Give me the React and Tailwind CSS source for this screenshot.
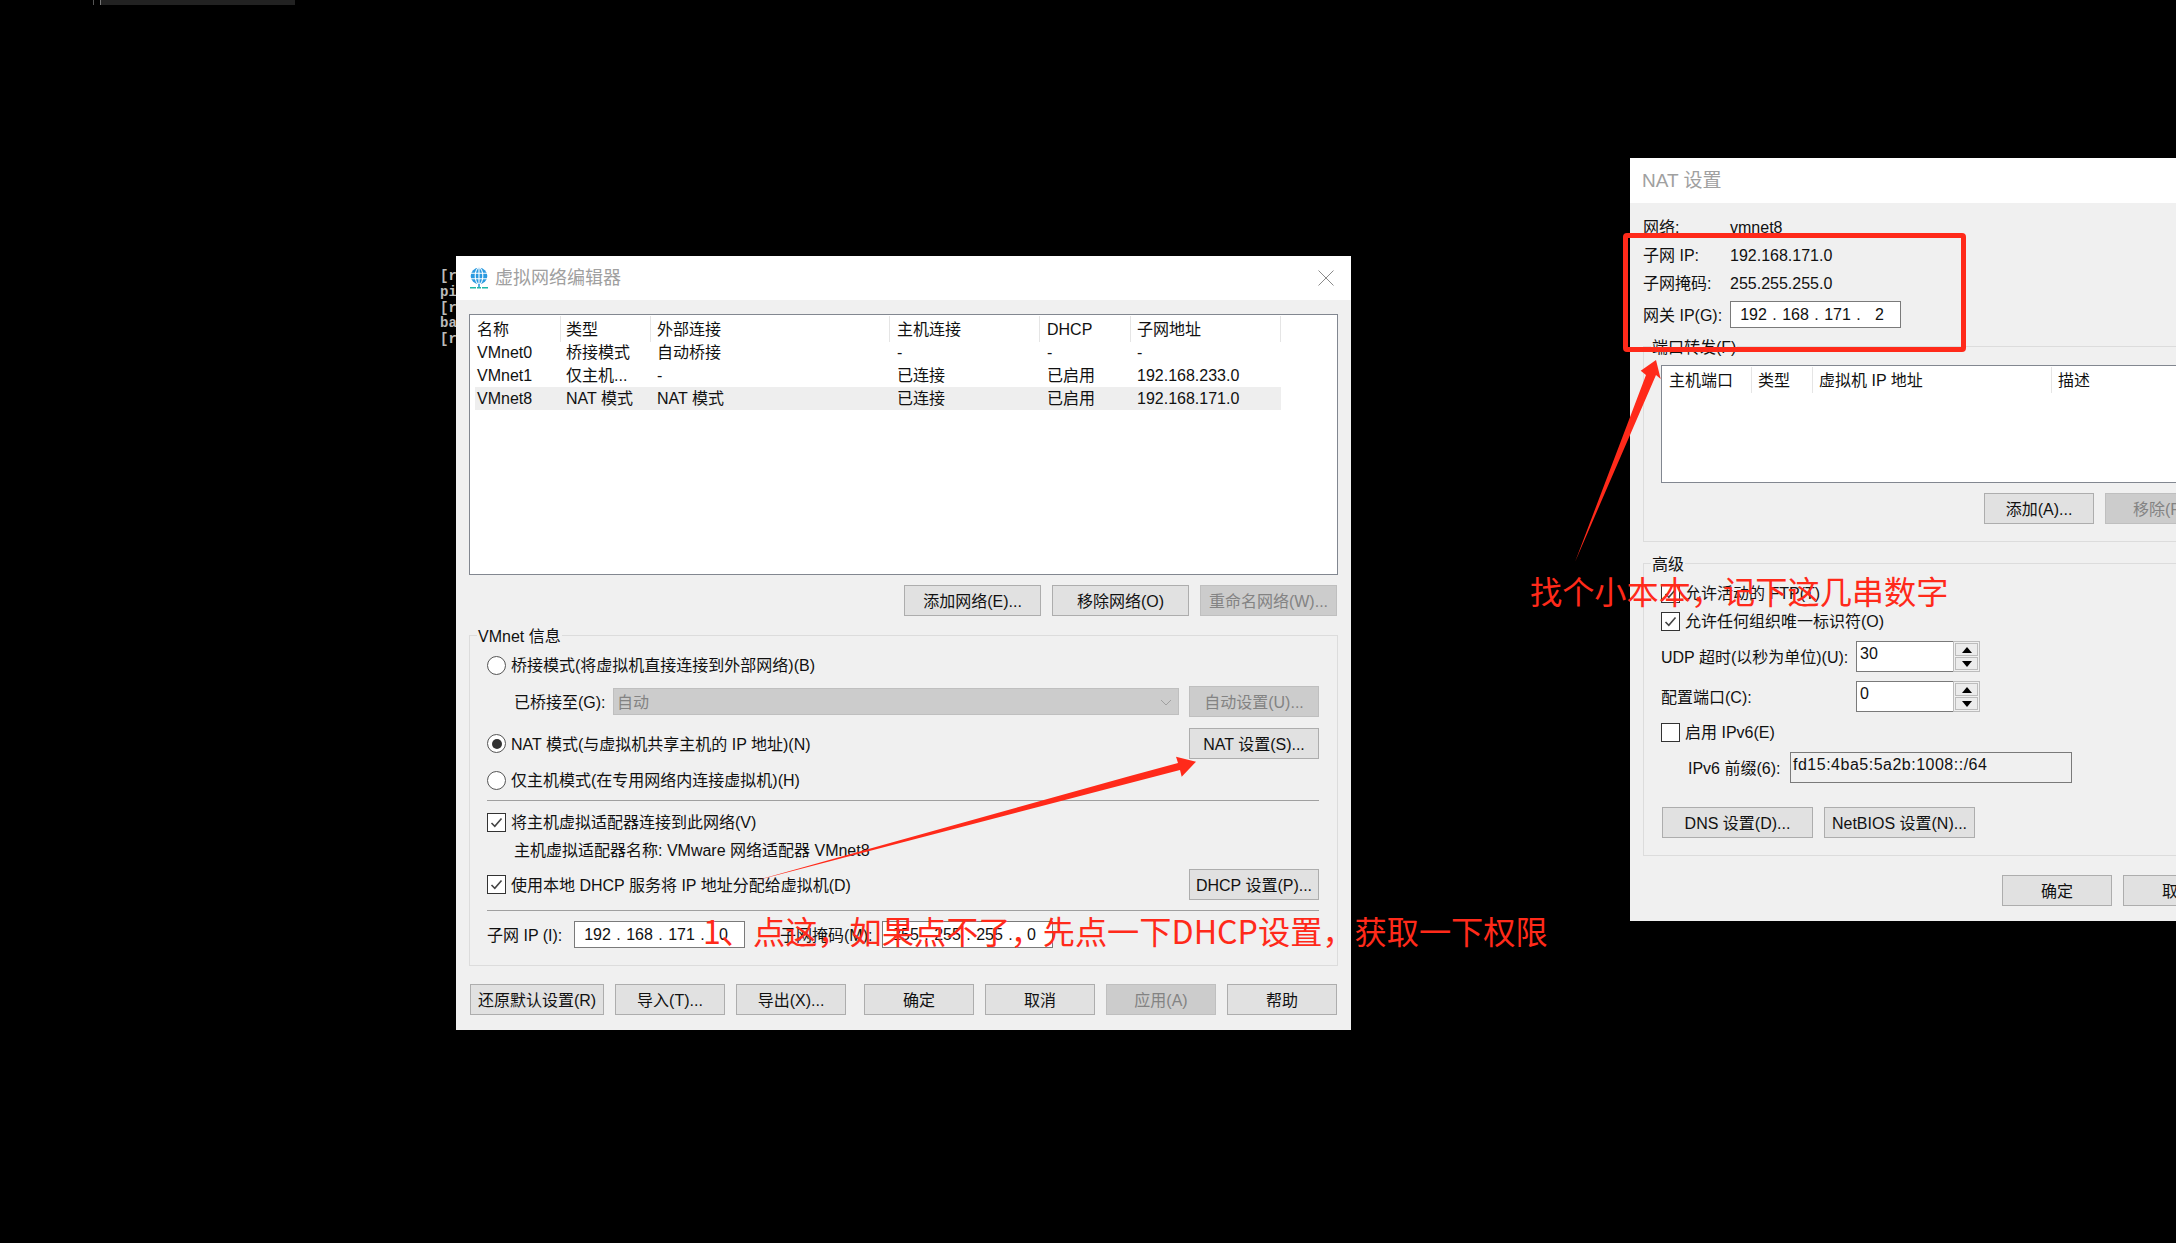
import React from "react";

function T({ children, extra = "" }) {
  return <span className={`pt-[2px] whitespace-nowrap ${extra}`}>{children}</span>;
}

function Btn({ children, w = "w-[110px]", disabled = false, extra = "" }) {
  const tone = disabled
    ? "bg-[#cccccc] border-[#bfbfbf] text-[#838383]"
    : "bg-[#e1e1e1] border-[#adadad] text-[#111111]";
  return (
    <div className={`${w} ${tone} ${extra} h-[31px] shrink-0 border-[1.5px] pt-[2px] flex items-center justify-center text-[16px] whitespace-nowrap`}>
      {children}
    </div>
  );
}

function Radio({ checked = false }) {
  return (
    <div className="w-[19px] h-[19px] shrink-0 rounded-full border-[1.5px] border-[#555555] bg-white flex items-center justify-center">
      {checked && <div className="w-[10px] h-[10px] rounded-full bg-[#333333]" />}
    </div>
  );
}

function Check({ checked = true }) {
  return (
    <div className="w-[19px] h-[19px] shrink-0 border border-[#333333] bg-white flex items-center justify-center">
      {checked && (
        <svg width="13" height="11" viewBox="0 0 13 11" fill="none">
          <path d="M1.5 6 L4.8 9.3 L11.5 1.5" stroke="#444444" strokeWidth="1.6" />
        </svg>
      )}
    </div>
  );
}

function Legend({ children }) {
  return (
    <div className="absolute left-[7px] top-[-10px] px-[1px] bg-[#f0f0f0] h-[22px] leading-[22px] text-[16px] text-[#111111] whitespace-nowrap">
      {children}
    </div>
  );
}

function IpBox({ parts }) {
  return (
    <div className="w-[171px] h-[27px] shrink-0 border border-[#7a7a7a] bg-white pl-[9px] pt-[1px] flex items-center text-[16px] text-[#111111]">
      <span className="w-[27px] text-center">{parts[0]}</span>
      <span className="w-[15px] text-center">.</span>
      <span className="w-[27px] text-center">{parts[1]}</span>
      <span className="w-[15px] text-center">.</span>
      <span className="w-[27px] text-center">{parts[2]}</span>
      <span className="w-[15px] text-center">.</span>
      <span className="w-[27px] text-center">{parts[3]}</span>
    </div>
  );
}

function Spinner({ value }) {
  return (
    <div className="w-[124px] h-[31px] shrink-0 flex">
      <div className="w-[97px] h-full border-y-[1.5px] border-l-[1.5px] border-[#7a7a7a] bg-white pl-[3px] pt-[1px] leading-[22px] text-[16px] text-[#111111]">
        {value}
      </div>
      <div className="w-[27px] h-full border-[1.5px] border-[#bcbcbc] p-[1px] flex flex-col gap-[1px]">
        <div className="flex-1 border border-[#bcbcbc] bg-[#ececec] flex items-center justify-center">
          <svg width="10" height="6" viewBox="0 0 10 6"><path d="M5 0 L10 6 H0 Z" fill="#000000" /></svg>
        </div>
        <div className="flex-1 border border-[#bcbcbc] bg-[#ececec] flex items-center justify-center">
          <svg width="10" height="6" viewBox="0 0 10 6"><path d="M0 0 H10 L5 6 Z" fill="#000000" /></svg>
        </div>
      </div>
    </div>
  );
}

const padCols = ["pl-[2px]", "pl-[5px]", "pl-[6px]", "pl-[7px]", "pl-[7px]", "pl-[6px]"];

function Row({ cells, active = false }) {
  return (
    <div className={`grid grid-cols-[86px_90px_239px_150px_91px_150px] w-[806px] h-[23px] items-center ${active ? "bg-[#eeeeee]" : ""}`}>
      {cells.map((c, i) => (
        <div key={i} className={`${padCols[i]} whitespace-nowrap`}>{c}</div>
      ))}
    </div>
  );
}

function VirtualNetworkEditor() {
  const header = ["名称", "类型", "外部连接", "主机连接", "DHCP", "子网地址"];
  return (
    <div className="absolute left-[456px] top-[256px] w-[895px] h-[774px] bg-[#f0f0f0] text-[16px] text-[#111111] flex flex-col">
      <div className="h-[44px] shrink-0 bg-white flex items-center pl-[13px] pr-[17px]">
        <svg width="20" height="22" viewBox="0 0 20 22" fill="none" className="shrink-0">
          <circle cx="10" cy="9" r="8.3" fill="#2a9ae0" />
          <ellipse cx="10" cy="9" rx="3.8" ry="8.3" stroke="#ffffff" strokeWidth="1.1" />
          <path d="M1.5 6.2 H18.5 M1.5 11.8 H18.5 M10 1 V17" stroke="#ffffff" strokeWidth="1.1" />
          <path d="M10 17 V20" stroke="#2a9ae0" strokeWidth="1.6" />
          <path d="M1 20.8 H7 M8 20.8 H12 M13 20.8 H19" stroke="#1fb8a8" strokeWidth="1.4" />
        </svg>
        <div className="ml-[6px] text-[18px] text-[#a0a0a0]">虚拟网络编辑器</div>
        <svg width="16" height="16" viewBox="0 0 16 16" className="ml-auto" fill="none">
          <path d="M0.5 0.5 L15.5 15.5 M15.5 0.5 L0.5 15.5" stroke="#8a8a8a" strokeWidth="1" />
        </svg>
      </div>
      <div className="pl-[13px] flex flex-col">
        <div className="mt-[14px] w-[869px] h-[261px] border border-[#828790] bg-white pl-[5px] pt-[1px]">
          <div className="grid grid-cols-[86px_90px_239px_150px_91px_150px] w-[806px] h-[25px] items-center">
            {header.map((h, i) => (
              <div key={h} className={`${padCols[i]} pt-[2px] h-full flex items-center border-r border-[#e5e5e5] whitespace-nowrap`}>{h}</div>
            ))}
          </div>
          <Row cells={["VMnet0", "桥接模式", "自动桥接", "-", "-", "-"]} />
          <Row cells={["VMnet1", "仅主机...", "-", "已连接", "已启用", "192.168.233.0"]} />
          <Row active cells={["VMnet8", "NAT 模式", "NAT 模式", "已连接", "已启用", "192.168.171.0"]} />
        </div>

        <div className="mt-[10px] w-[868px] flex justify-end gap-[11px]">
          <Btn w="w-[137px]">添加网络(E)...</Btn>
          <Btn w="w-[137px]">移除网络(O)</Btn>
          <Btn w="w-[137px]" disabled>重命名网络(W)...</Btn>
        </div>

        <div className="relative mt-[19px] w-[869px] h-[331px] border border-[#dcdcdc] pl-[17px] pr-[18px] flex flex-col">
          <Legend>VMnet 信息</Legend>
          <div className="mt-[16px] h-[26px] flex items-center gap-[5px]"><Radio /><T>桥接模式(将虚拟机直接连接到外部网络)(B)</T></div>
          <div className="mt-[8px] h-[31px] flex items-center pl-[27px]">
            <T extra="w-[99px]">已桥接至(G):</T>
            <div className="w-[566px] h-[27px] border border-[#bfbfbf] bg-[#cccccc] pl-[3px] pr-[6px] pt-[2px] flex items-center text-[#838383]">
              自动
              <svg width="12" height="7" viewBox="0 0 12 7" fill="none" className="ml-auto">
                <path d="M1 1 L6 6 L11 1" stroke="#a0a0a0" strokeWidth="1" />
              </svg>
            </div>
            <Btn w="w-[130px]" disabled extra="ml-[10px]">自动设置(U)...</Btn>
          </div>
          <div className="mt-[11px] h-[31px] flex items-center gap-[5px]">
            <Radio checked /><T>NAT 模式(与虚拟机共享主机的 IP 地址)(N)</T>
            <Btn w="w-[130px]" extra="ml-auto">NAT 设置(S)...</Btn>
          </div>
          <div className="mt-[8px] h-[26px] flex items-center gap-[5px]"><Radio /><T>仅主机模式(在专用网络内连接虚拟机)(H)</T></div>
          <div className="mt-[7px] h-[1px] shrink-0 bg-[#a0a0a0]" />
          <div className="mt-[8px] h-[26px] flex items-center gap-[5px]"><Check /><T>将主机虚拟适配器连接到此网络(V)</T></div>
          <div className="mt-[3px] h-[24px] flex items-center pl-[27px]"><T>主机虚拟适配器名称: VMware 网络适配器 VMnet8</T></div>
          <div className="mt-[7px] h-[31px] flex items-center gap-[5px]">
            <Check /><T>使用本地 DHCP 服务将 IP 地址分配给虚拟机(D)</T>
            <Btn w="w-[130px]" extra="ml-auto">DHCP 设置(P)...</Btn>
          </div>
          <div className="mt-[10px] h-[1px] shrink-0 bg-[#a0a0a0]" />
          <div className="mt-[10px] h-[27px] flex items-center">
            <T extra="w-[87px]">子网 IP (I):</T>
            <IpBox parts={["192", "168", "171", "0"]} />
            <T extra="w-[137px] pl-[35px]">子网掩码(M):</T>
            <IpBox parts={["255", "255", "255", "0"]} />
          </div>
        </div>

        <div className="mt-[18px] pl-[1px] flex">
          <Btn w="w-[134px]">还原默认设置(R)</Btn>
          <Btn extra="ml-[11px]">导入(T)...</Btn>
          <Btn extra="ml-[11px]">导出(X)...</Btn>
          <Btn extra="ml-[18px]">确定</Btn>
          <Btn extra="ml-[11px]">取消</Btn>
          <Btn disabled extra="ml-[11px]">应用(A)</Btn>
          <Btn extra="ml-[11px]">帮助</Btn>
        </div>
      </div>
    </div>
  );
}

function NatSettings() {
  return (
    <div className="absolute left-[1630px] top-[158px] w-[600px] h-[763px] bg-[#f0f0f0] text-[16px] text-[#111111] flex flex-col overflow-hidden">
      <div className="h-[45px] shrink-0 bg-white flex items-center pl-[12px] pt-[1px] text-[19px] text-[#a0a0a0]">NAT 设置</div>
      <div className="pl-[13px] flex flex-col">
        <div className="mt-[14px] h-[20px] flex items-center"><T extra="w-[87px]">网络:</T><T>vmnet8</T></div>
        <div className="mt-[8px] h-[20px] flex items-center"><T extra="w-[87px]">子网 IP:</T><T>192.168.171.0</T></div>
        <div className="mt-[8px] h-[20px] flex items-center"><T extra="w-[87px]">子网掩码:</T><T>255.255.255.0</T></div>
        <div className="mt-[8px] h-[27px] flex items-center">
          <T extra="w-[87px]">网关 IP(G):</T>
          <IpBox parts={["192", "168", "171", "2"]} />
        </div>

        <div className="relative mt-[18px] w-[640px] h-[196px] border border-[#dcdcdc] pl-[17px] flex flex-col">
          <Legend>端口转发(F)</Legend>
          <div className="mt-[18px] w-[560px] h-[118px] border border-[#828790] bg-white pt-[1px]">
            <div className="grid grid-cols-[90px_61px_239px_120px] h-[25px] items-center">
              <div className="pl-[7px] pt-[2px] h-full flex items-center border-r border-[#e5e5e5]">主机端口</div>
              <div className="pl-[6px] pt-[2px] h-full flex items-center border-r border-[#e5e5e5]">类型</div>
              <div className="pl-[6px] pt-[2px] h-full flex items-center border-r border-[#e5e5e5]">虚拟机 IP 地址</div>
              <div className="pl-[6px] pt-[2px] h-full flex items-center">描述</div>
            </div>
          </div>
          <div className="mt-[10px] pl-[323px] flex gap-[11px]">
            <Btn>添加(A)...</Btn>
            <Btn disabled>移除(R)</Btn>
          </div>
        </div>

        <div className="relative mt-[21px] w-[640px] h-[293px] border border-[#dcdcdc] pl-[17px] flex flex-col">
          <Legend>高级</Legend>
          <div className="mt-[19px] h-[20px] flex items-center gap-[5px]"><Check /><T>允许活动的 FTP(T)</T></div>
          <div className="mt-[8px] h-[20px] flex items-center gap-[5px]"><Check /><T>允许任何组织唯一标识符(O)</T></div>
          <div className="mt-[10px] flex items-center"><T extra="w-[195px]">UDP 超时(以秒为单位)(U):</T><Spinner value="30" /></div>
          <div className="mt-[9px] flex items-center"><T extra="w-[195px]">配置端口(C):</T><Spinner value="0" /></div>
          <div className="mt-[10px] h-[20px] flex items-center gap-[5px]"><Check checked={false} /><T>启用 IPv6(E)</T></div>
          <div className="mt-[10px] flex items-center pl-[27px]">
            <T extra="w-[102px]">IPv6 前缀(6):</T>
            <div className="w-[282px] h-[31px] border-[1.5px] border-[#7a7a7a] pl-[2px] pt-[1px] leading-[22px] tracking-[0.5px]">fd15:4ba5:5a2b:1008::/64</div>
          </div>
          <div className="mt-[24px] pl-[1px] flex gap-[11px]">
            <Btn w="w-[151px]">DNS 设置(D)...</Btn>
            <Btn w="w-[151px]">NetBIOS 设置(N)...</Btn>
          </div>
        </div>

        <div className="mt-[19px] pl-[359px] flex gap-[11px]">
          <Btn>确定</Btn>
          <Btn>取消</Btn>
        </div>
      </div>
    </div>
  );
}

export default function App() {
  return (
    <div lang="zh-CN" className="relative w-[2176px] h-[1243px] overflow-hidden bg-black font-['Liberation_Sans','Noto_Sans_CJK_SC',sans-serif]">
      <div className="absolute left-[93px] top-0 w-[1px] h-[5px] bg-[#555555]" />
      <div className="absolute left-[100px] top-0 w-[195px] h-[5px] bg-[#222222] border-l border-[#777777]" />

      <div className="absolute left-[440px] top-[269px] font-['Liberation_Mono',monospace] font-bold text-[14px] leading-[15.75px] text-[#bbbbbb]">
        <div>[r</div>
        <div>pi</div>
        <div>[r</div>
        <div>ba</div>
        <div>[r</div>
      </div>

      <VirtualNetworkEditor />
      <NatSettings />

      <div className="absolute left-[1623px] top-[233px] w-[343px] h-[119px] border-[5px] border-[#ff2a1a] rounded-[4px]" />

      <svg className="absolute left-0 top-0" width="2176" height="1243" viewBox="0 0 2176 1243">
        <path d="M754 881 L1130 776 L1178 763 L1176 756.7 L1196 761.7 L1181.7 776.7 L1180 770 L1130 783 Z" fill="#ff2a1a" />
        <path d="M1575 562 L1646 375 L1640.7 370.7 L1656 360 L1660.7 379 L1656 375 Z" fill="#ff2a1a" />
      </svg>

      <div className="absolute left-[703px] top-[906px] h-[48px] leading-[48px] text-[32.2px] text-[#ff2a1a] whitespace-nowrap font-['Noto_Sans_CJK_SC',sans-serif]">
        1、点这，如果点不了，先点一下DHCP设置，获取一下权限
      </div>
      <div className="absolute left-[1530px] top-[566px] h-[48px] leading-[48px] text-[32.2px] text-[#ff2a1a] whitespace-nowrap font-['Noto_Sans_CJK_SC',sans-serif]">
        找个小本本，记下这几串数字
      </div>
    </div>
  );
}
